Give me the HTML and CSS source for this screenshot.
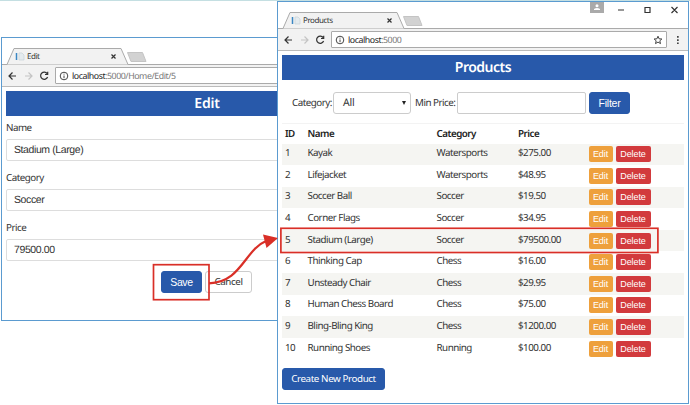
FILE: index.html
```html
<!DOCTYPE html>
<html lang="en">
<head>
<meta charset="utf-8">
<title>Products</title>
<link rel="stylesheet" href="styles.css">
</head>
<body>
<main class="desktop">
  <section class="window edit-window">
    <div class="titlebar">
      <svg class="tabs" width="160" height="17" viewBox="0 0 160 17">
        <path class="tab-shape" d="M0 16.5H3L10 .5H117L124 16.5H160"/>
        <path class="new-tab" d="M123.500 4.500H138.500L142 13.500H127Z"/>
        <path class="fav-bar" d="M12.500 5V12"/><path class="fav-page" d="M15 5H18L20 7V12H15Z"/>
        <path class="close-tab" d="M107.500 6.500l4 4m0-4l-4 4"/>
      </svg>
      <span class="tab-title">Edit</span>
    </div>
    <div class="toolbar">
      <svg class="nav" width="53" height="22" viewBox="0 0 53 22">
        <path class="ink" d="M14 11H7M10.500 7.500L7 11l3.500 3.500"/>
        <path class="faded" d="M23 11h7M26.500 7.500L30 11l-3.500 3.500"/>
        <path class="ink" d="M45.200 8.700A3.600 3.600 0 1 0 45.600 12M45.700 6.800V9.500H43"/>
      </svg>
      <div class="address">
        <svg class="info" width="10" height="10" viewBox="0 0 10 10"><circle cx="5" cy="5" r="3.800"/><path d="M5 4.500V7.200M5 2.700V3.600"/></svg>
        <span class="url"><b>localhost</b>:5000/Home/Edit/5</span>
      </div>
    </div>
    <div class="page">
      <h1 class="banner">Edit</h1>
      <label class="label">Name</label><div class="field">Stadium (Large)</div>
      <label class="label">Category</label><div class="field">Soccer</div>
      <label class="label">Price</label><div class="field">79500.00</div>
      <div class="actions"><button class="btn save">Save</button><button class="btn cancel">Cancel</button></div>
    </div>
  </section>

  <section class="window products-window">
    <div class="titlebar">
      <svg class="tabs" width="160" height="17" viewBox="0 0 160 17">
        <path class="tab-shape" d="M0 16.5H3L10 .5H117L124 16.5H160"/>
        <path class="new-tab" d="M123.500 4.500H138.500L142 13.500H127Z"/>
        <path class="fav-bar" d="M12.500 5V12"/><path class="fav-page" d="M15 5H18L20 7V12H15Z"/>
        <path class="close-tab" d="M107.500 6.500l4 4m0-4l-4 4"/>
      </svg>
      <span class="tab-title">Products</span>
      <svg class="controls" width="100" height="16" viewBox="0 0 100 16">
        <rect class="user-box" x="2" width="14" height="11"/><circle class="user" cx="9" cy="3.800" r="1.500"/><path class="user" d="M6 8V7q3-2 6 0V8Z"/>
        <path class="ink" d="M30 8h6M57 5.500h5v5h-5ZM83.500 5l6 6m0-6l-6 6"/>
      </svg>
    </div>
    <div class="toolbar">
      <svg class="nav" width="53" height="22" viewBox="0 0 53 22">
        <path class="ink" d="M14 11H7M10.500 7.500L7 11l3.500 3.500"/>
        <path class="faded" d="M23 11h7M26.500 7.500L30 11l-3.500 3.500"/>
        <path class="ink" d="M45.200 8.700A3.600 3.600 0 1 0 45.600 12M45.700 6.800V9.500H43"/>
      </svg>
      <div class="address">
        <svg class="info" width="10" height="10" viewBox="0 0 10 10"><circle cx="5" cy="5" r="3.800"/><path d="M5 4.500V7.200M5 2.700V3.600"/></svg>
        <span class="url"><b>localhost</b>:5000</span>
        <svg class="star" width="10" height="10" viewBox="0 0 10 10"><path d="M5 1.200L6.100 3.800L8.900 4L6.800 5.800L7.500 8.600L5 7.100L2.500 8.600L3.200 5.800L1.100 4L3.900 3.800Z"/></svg>
      </div>
      <svg class="dots" width="21" height="22" viewBox="0 0 21 22"><path d="M10 7h1.700v1.700h-1.700ZM10 10.200h1.700v1.700h-1.700ZM10 13.400h1.700v1.700h-1.700Z"/></svg>
    </div>
    <div class="page">
      <h1 class="banner">Products</h1>
      <div class="filters">
        <span class="category-label">Category:</span>
        <div class="select"><span>All</span><svg width="4" height="4" viewBox="0 0 4 4"><path d="M0 0H4L2 4Z"/></svg></div>
        <span class="price-label">Min Price:</span>
        <div class="price-input"></div>
        <button class="btn filter">Filter</button>
      </div>
      <div class="table">
        <div class="row head"><span>ID</span><span>Name</span><span>Category</span><span>Price</span></div>
        <div class="row"><span>1</span><span>Kayak</span><span>Watersports</span><span>$275.00</span><span class="tools"><button class="small edit">Edit</button><button class="small delete">Delete</button></span></div>
        <div class="row"><span>2</span><span>Lifejacket</span><span>Watersports</span><span>$48.95</span><span class="tools"><button class="small edit">Edit</button><button class="small delete">Delete</button></span></div>
        <div class="row"><span>3</span><span>Soccer Ball</span><span>Soccer</span><span>$19.50</span><span class="tools"><button class="small edit">Edit</button><button class="small delete">Delete</button></span></div>
        <div class="row"><span>4</span><span>Corner Flags</span><span>Soccer</span><span>$34.95</span><span class="tools"><button class="small edit">Edit</button><button class="small delete">Delete</button></span></div>
        <div class="row"><span>5</span><span>Stadium (Large)</span><span>Soccer</span><span>$79500.00</span><span class="tools"><button class="small edit">Edit</button><button class="small delete">Delete</button></span></div>
        <div class="row"><span>6</span><span>Thinking Cap</span><span>Chess</span><span>$16.00</span><span class="tools"><button class="small edit">Edit</button><button class="small delete">Delete</button></span></div>
        <div class="row"><span>7</span><span>Unsteady Chair</span><span>Chess</span><span>$29.95</span><span class="tools"><button class="small edit">Edit</button><button class="small delete">Delete</button></span></div>
        <div class="row"><span>8</span><span>Human Chess Board</span><span>Chess</span><span>$75.00</span><span class="tools"><button class="small edit">Edit</button><button class="small delete">Delete</button></span></div>
        <div class="row"><span>9</span><span>Bling-Bling King</span><span>Chess</span><span>$1200.00</span><span class="tools"><button class="small edit">Edit</button><button class="small delete">Delete</button></span></div>
        <div class="row"><span>10</span><span>Running Shoes</span><span>Running</span><span>$100.00</span><span class="tools"><button class="small edit">Edit</button><button class="small delete">Delete</button></span></div>
      </div>
      <button class="btn create">Create New Product</button>
    </div>
  </section>

  <svg class="callouts" width="690" height="405" viewBox="0 0 690 405">
    <rect x="153.500" y="264.700" width="55.500" height="35"/>
    <rect x="280.900" y="228.300" width="377" height="24.200"/>
    <path class="connector" d="M209 283.300C242 282 244 250 267 240.500"/>
    <path class="arrowhead" d="M263 234.500L278 238L266.500 248Z"/>
  </svg>
</main>
</body>
</html>
```
FILE: styles.css
```css
* { box-sizing: border-box; }
body { margin: 0; background: #fff; color: #333; font: 9.8px/14px "Noto Sans", "Open Sans", sans-serif; letter-spacing: -.5px; text-rendering: geometricPrecision; }
.desktop { position: relative; width: 690px; height: 405px; overflow: hidden; border-top: 1px solid #c4dfe2; }
.window { position: absolute; background: #fff; border: 1px solid #5b9bd0; overflow: hidden; }
.edit-window { left: 1px; top: 36px; width: 290px; height: 284px; }
.products-window { left: 277px; top: 0; width: 412px; height: 403px; }
svg { display: block; flex: none; fill: none; }
.titlebar { display: flex; height: 27px; padding-top: 10px; position: relative; background: linear-gradient(#aaa, #aaa) bottom / 100% 1px no-repeat; }
.tabs { margin-left: 2px; }
.tab-shape { fill: #f2f2f2; stroke: #aaa; }
.new-tab { fill: #d2d2d2; stroke: #c4c4c4; }
.fav-bar { stroke: #3b87c3; stroke-width: 1.500; }
.fav-page { fill: #e4ebef; stroke: #c8d2d8; stroke-width: .7; }
.close-tab, .ink { stroke: #333; stroke-width: 1.200; }
.faded { stroke: #c4c4c4; stroke-width: 1.200; }
.tab-title { position: absolute; left: 25px; top: 12px; font-size: 8px; line-height: 14px; letter-spacing: -.45px; }
.controls { position: absolute; right: 0; top: 0; width: 100px; }
.user-box { fill: #aaa; }
.user { fill: #fff; }
.toolbar { display: flex; align-items: center; height: 22px; background: #f2f2f2; border-bottom: 1px solid #bbb; }
.address { display: flex; align-items: center; flex: 1; height: 17px; padding-left: 3px; background: #fff; border: 1px solid #aaa; border-radius: 1px; }
.info circle, .info path { stroke: #444; stroke-width: 1; }
.url { margin-left: 3px; font-size: 8.8px; color: #777; letter-spacing: -.45px; }
.url b { font-weight: 400; color: #222; }
.star { margin: 0 3px 0 auto; stroke: #444; stroke-width: 1; }
.dots path { fill: #444; }
.page { padding: 4px 4px; }
.banner { margin: 0; height: 25px; background: #2859aa; color: #fff; text-align: center; font: 600 14px/26px "Noto Sans", sans-serif; letter-spacing: -.5px; }
.edit-window .banner { width: 402px; letter-spacing: -.2px; }
.label { display: block; height: 23px; padding-top: 5px; line-height: 14px; }
.label:not(:first-of-type) { height: 28px; padding-top: 10px; }
.field { height: 22px; width: 402px; padding-left: 7px; border: 1px solid #ddd; border-radius: 2px; font: 10.500px/20px "Liberation Sans", sans-serif; letter-spacing: -.4px; }
.actions { display: flex; gap: 3px; margin: 10px 0 0 155px; }
.btn { height: 22px; padding: 0; border: 1px solid #2859aa; border-radius: 3px; background: #2859aa; color: #fff; font: 9.8px/20px "Noto Sans", sans-serif; letter-spacing: -.4px; }
.btn.save { width: 41px; font: 10.5px/20px "Liberation Sans", sans-serif; }
.cancel { width: 47px; color: #333; border-color: #ccc; background: #fff; }
.filters { display: flex; align-items: center; margin-top: 12px; padding-left: 10px; height: 22px; }
.category-label { width: 41px; white-space: nowrap; }
.select { display: flex; align-items: center; justify-content: space-between; width: 78px; height: 22px; padding: 0 4px 1px 9px; border: 1px solid #ccc; border-radius: 3px; font-size: 10.5px; letter-spacing: -.2px; }
.select path { fill: #222; }
.price-label { width: 46px; padding-left: 4px; white-space: nowrap; }
.price-input { width: 129px; height: 22px; border: 1px solid #ccc; border-radius: 2px; }
.btn.filter { width: 41px; margin-left: 3px; font: 10.5px/20px "Liberation Sans", sans-serif; letter-spacing: -.2px; }
.table { margin-top: 9px; border-top: 1px solid #f3f3f3; }
.row { display: grid; grid-template-columns: 22.500px 129px 81.500px 70.500px 1fr; align-items: center; height: 21.600px; padding-left: 3px; white-space: nowrap; }
.row:not(.head) > span:not(.tools) { padding-bottom: 2px; }
.row:nth-child(even) { background: #f5f5f2; }
.head { height: 19.500px; font-weight: 600; color: #222; letter-spacing: -.5px; }
.tools { display: flex; gap: 3px; }
.small { height: 16px; padding: 0; border: 0; border-radius: 2px; color: #fff; font: 9px/17px "Liberation Sans", sans-serif; letter-spacing: -.1px; }
.edit { width: 24px; background: #eea03c; }
.delete { width: 35px; background: #d23a3d; }
.create { display: block; width: 103px; margin-top: 9px; }
.callouts { position: absolute; left: 0; top: -1px; stroke: #d92f27; stroke-width: 1.700; }
.connector { stroke-width: 2.200; }
.arrowhead { fill: #d92f27; stroke: none; }
```
